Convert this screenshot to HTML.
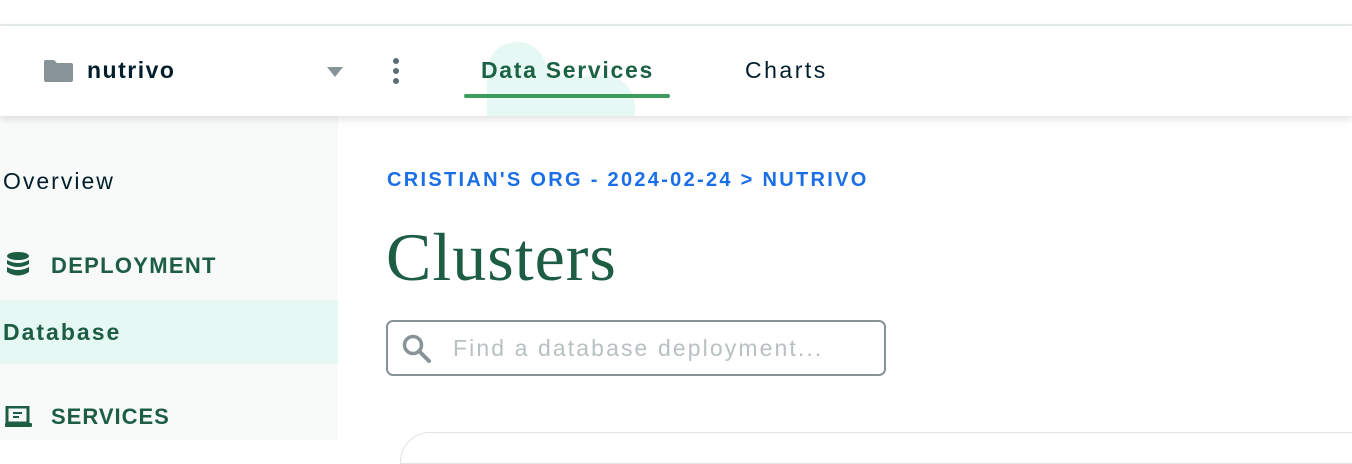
<!DOCTYPE html>
<html><head><style>
body{margin:0;width:1352px;height:440px;overflow:hidden;background:#fff;font-family:"Liberation Sans",sans-serif;position:relative}
.top{position:absolute;left:0;top:0;width:1352px;height:24px;background:#fff;border-bottom:2px solid #e8edeb}
.nav{position:absolute;left:0;top:26px;width:1352px;height:90px;background:#fff;box-shadow:0 3px 8px rgba(0,0,0,.12);z-index:2}
.side{position:absolute;left:0;top:116px;width:338px;height:324px;background:#f7faf9}
.abs{position:absolute;white-space:nowrap}
</style></head><body>
<div class="top"></div>
<div class="nav">
 <svg class="abs" style="left:44px;top:34px" width="29" height="22"><path d="M0 2a2 2 0 0 1 2-2h8l3 3h14a2 2 0 0 1 2 2v15a2 2 0 0 1-2 2H2a2 2 0 0 1-2-2z" fill="#889397"/></svg>
 <div class="abs" style="left:87px;top:31px;font-size:23px;font-weight:bold;color:#001e2b;letter-spacing:1.5px">nutrivo</div>
 <svg class="abs" style="left:327px;top:41px" width="16" height="10"><path d="M0 0h16L8 10z" fill="#889397"/></svg>
 <svg class="abs" style="left:390px;top:31px" width="12" height="28"><circle cx="6" cy="4" r="3" fill="#5c6c75"/><circle cx="6" cy="14" r="3" fill="#5c6c75"/><circle cx="6" cy="24" r="3" fill="#5c6c75"/></svg>
 <div class="abs" style="left:487px;top:16px;width:60px;height:74px;background:#e6f8f3;border-radius:30px 30px 0 0"></div>
 <div class="abs" style="left:487px;top:50px;width:148px;height:40px;background:#e6f8f3;border-radius:30px 30px 0 0"></div>
 <div class="abs" style="left:481px;top:31px;font-size:23px;font-weight:bold;color:#1c6244;letter-spacing:1.7px">Data Services</div>
 <div class="abs" style="left:464px;top:68px;width:206px;height:4px;background:#3d9c5c;border-radius:2px"></div>
 <div class="abs" style="left:745px;top:31px;font-size:23px;color:#001e2b;letter-spacing:2.5px">Charts</div>
</div>
<div class="side">
 <div class="abs" style="left:3px;top:52px;font-size:23px;color:#001e2b;letter-spacing:2px">Overview</div>
 <svg class="abs" style="left:6px;top:136px" width="24" height="25"><ellipse cx="12" cy="4" rx="11" ry="4" fill="#1c5d43"/><path d="M1 8q11 6 22 0v4q-11 6-22 0zM1 15q11 6 22 0v5q-11 7-22 0z" fill="#1c5d43"/></svg>
 <div class="abs" style="left:51px;top:137px;font-size:22px;font-weight:bold;letter-spacing:1.3px;color:#1c5d43">DEPLOYMENT</div>
 <div class="abs" style="left:0;top:184px;width:338px;height:64px;background:#e6f8f3"></div>
 <div class="abs" style="left:3px;top:203px;font-size:23px;font-weight:bold;color:#1c5d43;letter-spacing:2px">Database</div>
 <svg class="abs" style="left:5px;top:290px" width="28" height="22"><rect x="2" y="1" width="21" height="16" fill="none" stroke="#1c5d43" stroke-width="3"/><path d="M8 7h9M8 11h6" stroke="#1c5d43" stroke-width="2"/><rect x="0" y="17" width="27" height="4" rx="1" fill="#1c5d43"/></svg>
 <div class="abs" style="left:51px;top:288px;font-size:22px;font-weight:bold;letter-spacing:1px;color:#1c5d43">SERVICES</div>
</div>
<div class="abs" style="left:387px;top:169px;font-size:20px;font-weight:bold;color:#1a6ee8;letter-spacing:2.3px">CRISTIAN'S ORG - 2024-02-24 &gt; NUTRIVO</div>
<div class="abs" style="left:386px;top:218px;font-family:'Liberation Serif',serif;font-size:68px;color:#1c5d43;letter-spacing:1px">Clusters</div>
<div class="abs" style="left:386px;top:320px;width:496px;height:52px;border:2px solid #889397;border-radius:7px"></div>
<svg class="abs" style="left:401px;top:333px" width="32" height="32"><circle cx="12" cy="12" r="8.5" fill="none" stroke="#889397" stroke-width="3.5"/><path d="M18 18l10 10" stroke="#889397" stroke-width="4" stroke-linecap="round"/></svg>
<div class="abs" style="left:453px;top:335px;font-size:23px;color:#b8c0c2;letter-spacing:2.1px">Find a database deployment...</div>
<div class="abs" style="left:400px;top:432px;width:952px;height:30px;border:1px solid #e0e4e4;border-radius:30px 0 0 0"></div>
</body></html>
